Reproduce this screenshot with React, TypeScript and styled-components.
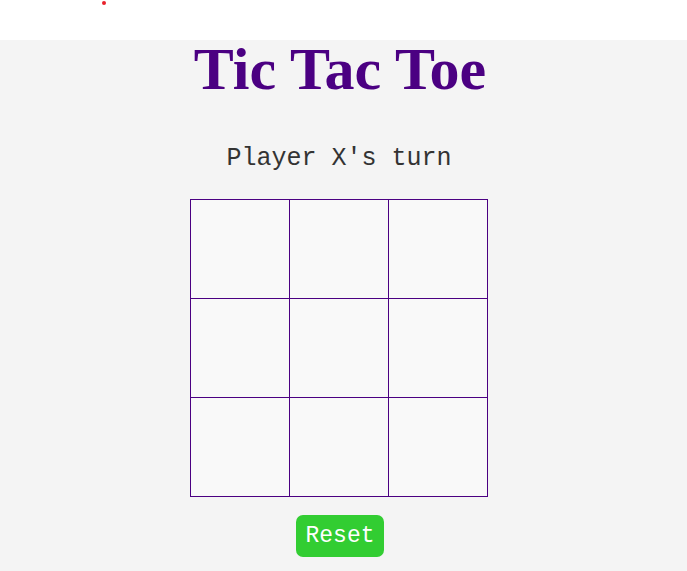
import styled, { createGlobalStyle } from 'styled-components'

const GlobalStyle = createGlobalStyle`
  html, body {
    margin: 0;
    padding: 0;
    background: #f4f4f4;
  }
`

const TopBar = styled.div`
  height: 40px;
  background: #ffffff;
  box-sizing: border-box;
  padding: 1px 0 0 102px;
`

const Dot = styled.span`
  display: block;
  width: 4px;
  height: 4px;
  border-radius: 50%;
  background: #e8202a;
`

const Main = styled.main`
  display: flex;
  flex-direction: column;
  align-items: center;
  padding-right: 9px;
  padding-bottom: 14px;
  background: #f4f4f4;
`

const Title = styled.h1`
  margin: -1px 0 0 2px;
  font-family: 'Liberation Serif', 'Times New Roman', serif;
  font-size: 60px;
  line-height: 1;
  font-weight: 700;
  color: #4b0082;
`

const Status = styled.p`
  margin: 47px 0 0;
  font-family: 'Courier New', 'Liberation Mono', monospace;
  font-size: 25px;
  line-height: 1;
  color: #333333;
`

const Board = styled.div`
  margin-top: 28px;
  display: grid;
  grid-template-columns: repeat(3, 98px);
  grid-template-rows: repeat(3, 98px);
  gap: 1px;
  padding: 1px;
  background: #4b0082;
`

const Cell = styled.button`
  border: none;
  padding: 0;
  margin: 0;
  background: #f9f9f9;
  font-family: 'Courier New', 'Liberation Mono', monospace;
  font-size: 48px;
  color: #4b0082;
  cursor: pointer;
`

const ResetButton = styled.button`
  margin: 18px 0 0 2px;
  width: 88px;
  height: 42px;
  border: none;
  border-radius: 7px;
  background: #32cd32;
  color: #ffffff;
  font-family: 'Courier New', 'Liberation Mono', monospace;
  font-size: 23px;
  line-height: 1;
  padding: 0;
  cursor: pointer;
`

export default function App() {
  const cells = Array.from({ length: 9 }, (_, i) => i)
  return (
    <>
      <GlobalStyle />
      <TopBar>
        <Dot />
      </TopBar>
      <Main>
        <Title>Tic Tac Toe</Title>
        <Status>Player X's turn</Status>
        <Board>
          {cells.map((i) => (
            <Cell key={i} aria-label={`cell ${i + 1}`} />
          ))}
        </Board>
        <ResetButton>Reset</ResetButton>
      </Main>
    </>
  )
}
